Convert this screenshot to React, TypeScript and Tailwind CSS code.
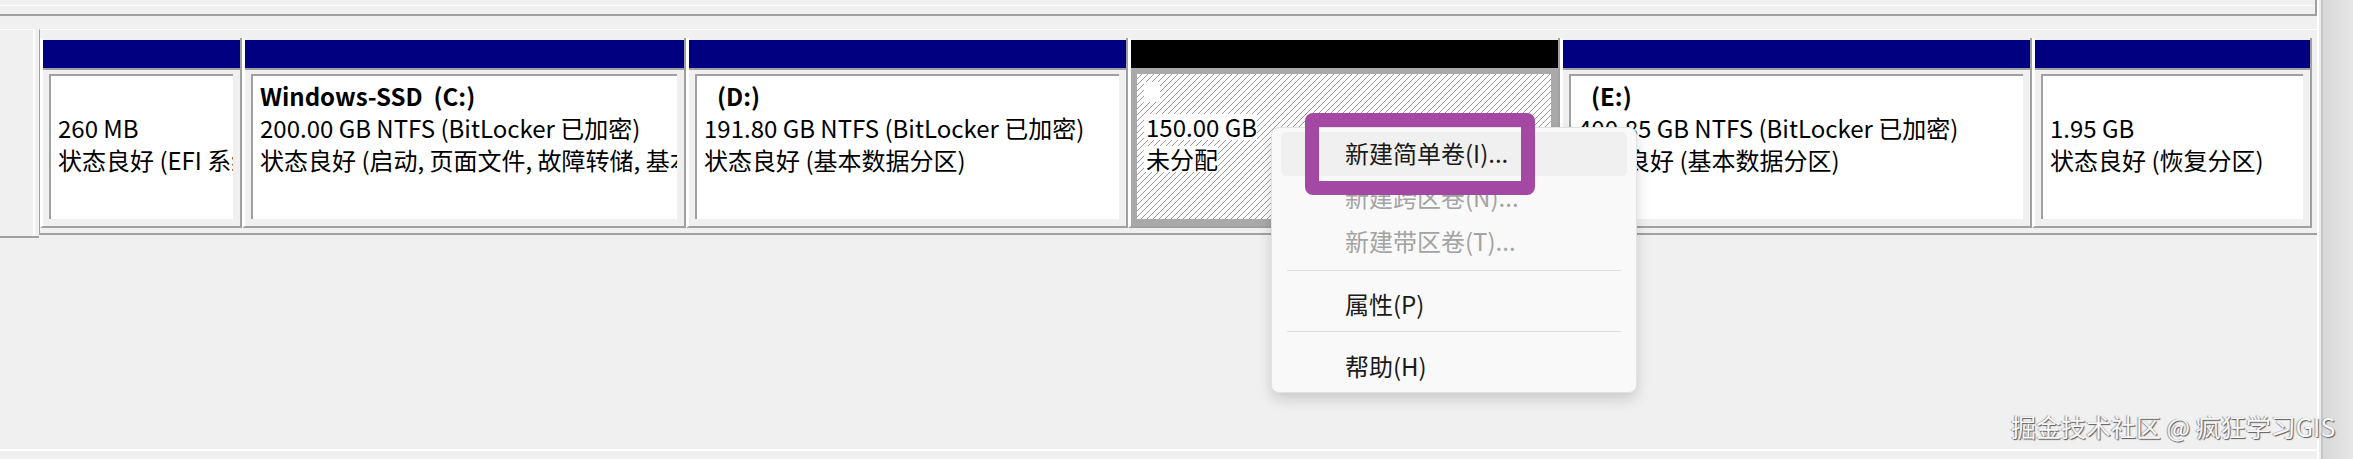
import React from 'react';

type Part = {
  width: string;
  label?: string;
  labelPad?: boolean;
  size: string;
  status: string;
  free?: boolean;
};

const PARTS: Part[] = [
  { width: 'w-[202px]', size: '260 MB', status: '状态良好 (EFI 系统分区)' },
  {
    width: 'w-[444px]',
    label: 'Windows-SSD  (C:)',
    size: '200.00 GB NTFS (BitLocker 已加密)',
    status: '状态良好 (启动, 页面文件, 故障转储, 基本数据分区)',
  },
  {
    width: 'w-[442px]',
    label: '(D:)',
    labelPad: true,
    size: '191.80 GB NTFS (BitLocker 已加密)',
    status: '状态良好 (基本数据分区)',
  },
  { width: 'w-[432px]', size: '150.00 GB', status: '未分配', free: true },
  {
    width: 'w-[472px]',
    label: '(E:)',
    labelPad: true,
    size: '400.85 GB NTFS (BitLocker 已加密)',
    status: '状态良好 (基本数据分区)',
  },
  { width: 'w-[280px]', size: '1.95 GB', status: '状态良好 (恢复分区)' },
];

function PartitionCell({ part }: { part: Part }) {
  const free = !!part.free;
  return (
    <div
      className={`${part.width} shrink-0 h-[190px] flex flex-col pt-[2px] border-l-[3px] border-l-white border-r-2 border-r-[#a0a0a0] border-b-2 border-b-[#a0a0a0]`}
    >
      {/* 顶部色条 */}
      <div className={`h-[28px] ${free ? 'bg-black' : 'bg-[#000080]'}`} />

      {/* 内容区 */}
      <div
        className={`flex-1 flex flex-col border-t-2 pt-[4px] pl-[6px] pr-[7px] pb-[7px] ${
          free ? 'border-[#a9a9a9] bg-[#a9a9a9]' : 'border-[#a0a0a0]'
        }`}
      >
        <div
          className={`flex-1 overflow-hidden whitespace-nowrap pl-[7px] text-[24px] leading-[32px] text-black ${
            free
              ? 'pl-[6px] pt-[5px] bg-[repeating-linear-gradient(135deg,#ffffff_0px,#ffffff_3.2px,#9c9c9c_3.2px,#9c9c9c_4.24px)]'
              : 'pt-[4px] border-t-2 border-l-2 border-[#a0a0a0] bg-white'
          }`}
        >
          {free ? (
            <>
              <div className="h-[32px] flex items-start pt-[3px]">
                <span className="inline-block w-[16px] h-[20px] bg-white" />
              </div>
              <div className="h-[32px] flex items-center">
                <span className="bg-white leading-[26px] pl-[2px]">{part.size}</span>
              </div>
              <div className="h-[32px] flex items-center">
                <span className="bg-white leading-[26px] pl-[2px]">{part.status}</span>
              </div>
            </>
          ) : (
            <>
              <div className={`h-[32px] font-bold whitespace-pre ${part.labelPad ? 'pl-[13px]' : ''}`}>
                {part.label ?? ''}
              </div>
              <div className="h-[32px]">{part.size}</div>
              <div className="h-[32px]">{part.status}</div>
            </>
          )}
        </div>
      </div>
    </div>
  );
}

function ContextMenu() {
  return (
    <div className="absolute left-[1271px] top-[127px] w-[366px] h-[266px] rounded-[8px] bg-[#f9f9f9] border border-[#e2e2e2] shadow-[0_6px_14px_rgba(0,0,0,0.16)] pt-[4px] text-[24px] leading-none">
      {/* 新建简单卷 */}
      <div className="mx-[9px] h-[44px] rounded-[5px] bg-[#f0f0f0] flex items-center pl-[64px] pb-[3px] text-[#1a1a1a]">
        新建简单卷(I)...
      </div>
      <div className="mx-[9px] h-[44px] flex items-center pl-[64px] pb-[3px] text-[#a3a3a3]">新建跨区卷(N)...</div>
      <div className="mx-[9px] h-[44px] flex items-center pl-[64px] pb-[3px] text-[#a3a3a3]">新建带区卷(T)...</div>

      <div className="mx-[15px] mt-[6px] mb-[12px] h-px bg-[#dedede]" />

      <div className="mx-[9px] h-[44px] flex items-center pl-[64px] pb-[3px] text-[#1a1a1a]">属性(P)</div>

      <div className="mx-[15px] mt-[4px] mb-[13px] h-px bg-[#dedede]" />

      <div className="mx-[9px] h-[44px] flex items-center pl-[64px] pb-[3px] text-[#1a1a1a]">帮助(H)</div>
    </div>
  );
}

export default function App() {
  return (
    <div
      className="relative w-[2353px] h-[459px] overflow-hidden bg-[#f0f0f0] text-black"
      style={{ fontFamily: '"Noto Sans CJK SC", "Noto Sans", sans-serif' }}
    >
      <div className="flex h-full">
        {/* 主区域 */}
        <div className="w-[2317px] shrink-0 flex flex-col">
          {/* 上一磁盘行的底边 */}
          <div className="h-[16px] border-b-2 border-r-2 border-[#a0a0a0]">
            <div className="mt-[5px] h-px bg-[#fbfbfb]" />
          </div>
          <div className="h-[13px]" />

          {/* 磁盘行 */}
          <div className="flex h-[209px]">
            {/* 左侧磁盘标签 */}
            <div className="w-[39px] shrink-0 h-full border-b-2 border-[#a0a0a0]">
              <div className="w-[35px] h-full border-t border-r-2 border-white" />
            </div>

            {/* 分区容器 */}
            <div className="flex-1 h-[206px] border-l border-l-[#a0a0a0] border-t border-t-white border-b-2 border-b-[#a0a0a0] pt-[8px]">
              <div className="flex">
                {PARTS.map((p, i) => (
                  <PartitionCell key={i} part={p} />
                ))}
              </div>
            </div>
          </div>

          <div className="flex-1" />
          <div className="h-[2px] bg-white mb-[8px]" />
        </div>

        {/* 右侧滚动条 */}
        <div className="flex-1 flex border-l-2 border-white">
          <div className="w-[2px] bg-[#ececec]" />
          <div className="flex-1 border-l-2 border-[#c6c6c6] bg-gradient-to-r from-[#d8d8d8] to-[#e6e6e6]" />
        </div>
      </div>

      <ContextMenu />

      {/* 标注框 */}
      <div className="absolute left-[1305px] top-[113px] w-[230px] h-[82px] border-[14px] border-[#a349a4] rounded-[8px]" />

      {/* 水印 */}
      <div className="absolute left-[2011px] top-[414px] text-[25px] leading-none whitespace-nowrap text-[#f7f7f7] [text-shadow:1px_1px_1px_#5a5a5a,-1px_0_1px_#9a9a9a]">
        掘金技术社区 @ 疯狂学习GIS
      </div>
    </div>
  );
}
